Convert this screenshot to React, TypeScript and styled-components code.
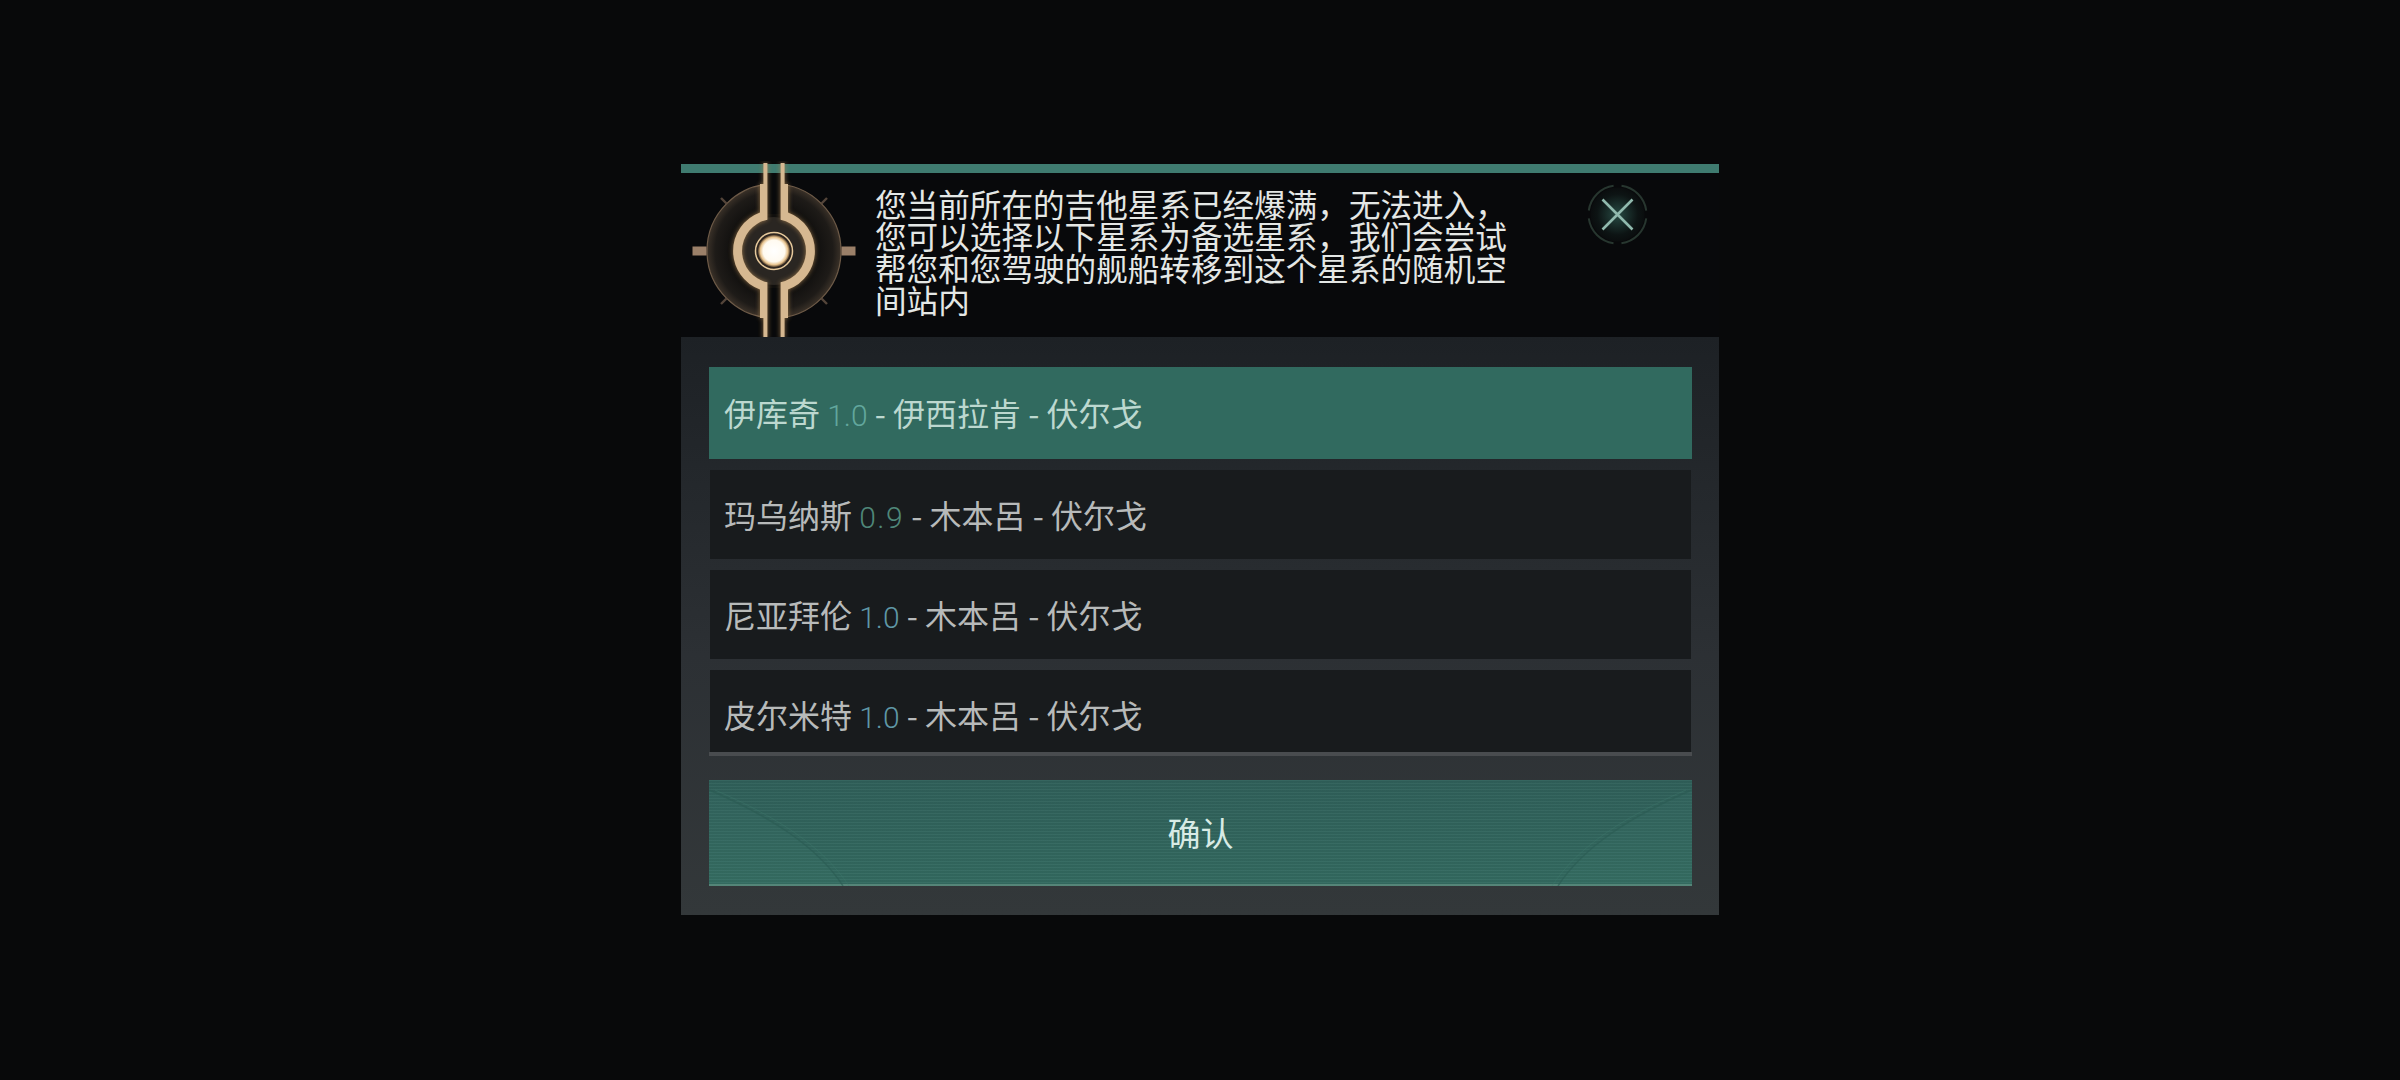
import React from "react"
import styled, { createGlobalStyle } from "styled-components"

const GlobalStyle = createGlobalStyle`
  html, body {
    margin: 0;
    padding: 0;
    background: #08090a;
  }
  body {
    font-family: "Noto Sans CJK SC", "Noto Sans", sans-serif;
  }
`

type System = { name: string; level: string; tone: string; region: string; active?: boolean; wide?: boolean }

const systems: System[] = [
  { name: "伊库奇", level: "1.0", tone: "#62a79d", region: "伊西拉肯", active: true },
  { name: "玛乌纳斯", level: "0.9", tone: "#4f8779", region: "木本呂", wide: true },
  { name: "尼亚拜伦", level: "1.0", tone: "#5f98a6", region: "木本呂" },
  { name: "皮尔米特", level: "1.0", tone: "#5f98a6", region: "木本呂" },
]

const Emblem: React.FC = () => {
  const half = "M-10.6 -88 L-6.6 -88 L-6.6 -31.3 A32 32 0 0 0 -6.6 31.3 L-6.6 88 L-10.6 88 L-10.6 67 L-14 67 L-14 38.5 A41 41 0 0 1 -14 -38.5 L-14 -67 L-10.6 -67 Z"
  return (
    <EmblemSvg viewBox="0 0 180 180">
      <defs>
        <radialGradient id="disc" cx="50%" cy="50%" r="50%">
          <stop offset="62%" stopColor="#100f0e" />
          <stop offset="88%" stopColor="#1e1b18" />
          <stop offset="100%" stopColor="#3a3128" />
        </radialGradient>
        <radialGradient id="core" cx="50%" cy="50%" r="50%">
          <stop offset="0%" stopColor="#ffffff" />
          <stop offset="68%" stopColor="#fffaf0" />
          <stop offset="86%" stopColor="#e8c48f" />
          <stop offset="100%" stopColor="#5c4630" />
        </radialGradient>
        <filter id="glow" x="-30%" y="-30%" width="160%" height="160%">
          <feGaussianBlur stdDeviation="2.4" />
        </filter>
      </defs>
      <g transform="translate(90 90)">
        <circle r="67" fill="url(#disc)" stroke="#6e5b48" strokeWidth="1.2" />
        <rect x="-14" y="-69" width="28" height="32" fill="#08090b" />
        <rect x="-14" y="37" width="28" height="32" fill="#08090b" />
        <circle r="34" fill="#2a2622" />
        <g stroke="#54453a" strokeWidth="2.4">
          <path d="M-47.5 -47.5 L-53 -53" />
          <path d="M47.5 -47.5 L53 -53" />
          <path d="M-47.5 47.5 L-53 53" />
          <path d="M47.5 47.5 L53 53" />
        </g>
        <rect x="-81.5" y="-4.5" width="14" height="9" fill="#9b8069" />
        <rect x="67.5" y="-4.5" width="14" height="9" fill="#9b8069" />
        <g filter="url(#glow)" fill="#a8814f" opacity="0.85">
          <path d={half} />
          <path d={half} transform="scale(-1 1)" />
        </g>
        <g fill="#d6b891">
          <path d={half} />
          <path d={half} transform="scale(-1 1)" />
        </g>
        <circle r="18.5" fill="#2e2620" stroke="#e6c99c" strokeWidth="1.5" />
        <circle r="16" fill="url(#core)" />
      </g>
    </EmblemSvg>
  )
}

const CloseIcon: React.FC = () => (
  <CloseButton>
    <svg viewBox="0 0 63 63" width="63" height="63">
      <defs>
        <radialGradient id="closeGlow" cx="50%" cy="50%" r="50%">
          <stop offset="0%" stopColor="#274a43" />
          <stop offset="75%" stopColor="#0d1414" />
          <stop offset="100%" stopColor="#0a0d0e" />
        </radialGradient>
      </defs>
      <circle cx="31.5" cy="31.5" r="27" fill="url(#closeGlow)" />
      <circle
        cx="31.5"
        cy="31.5"
        r="29"
        fill="none"
        stroke="#27362f"
        strokeWidth="2"
        strokeDasharray="37.5 8"
        strokeDashoffset="-4"
      />
      <path d="M16.5 16.5 L46.5 46.5 M46.5 16.5 L16.5 46.5" stroke="#90b9ad" strokeWidth="2.6" />
    </svg>
  </CloseButton>
)

const CornerArt: React.FC = () => (
  <>
    <path d="M0 10 C60 36 108 66 134 106 L0 106 Z" fill="#4a8a7d" opacity="0.08" />
    <path d="M0 10 C60 36 108 66 134 106" fill="none" stroke="#2c5c54" strokeWidth="1.5" opacity="0.6" />
    <path d="M6 10 C66 36 114 66 140 106" fill="none" stroke="#3f7a6e" strokeWidth="1" opacity="0.35" />
  </>
)

export default function App() {
  return (
    <>
      <GlobalStyle />
      <Page>
        <Dialog>
          <Header>
            <Emblem />
            <Message>
              您当前所在的吉他星系已经爆满，无法进入，您可以选择以下星系为备选星系，我们会尝试帮您和您驾驶的舰船转移到这个星系的随机空间站内
            </Message>
            <CloseIcon />
          </Header>
          <Body>
            <List>
              {systems.map((s) => (
                <Row key={s.name} $active={s.active}>
                  {s.name} <Level $wide={s.wide} style={{ color: s.tone }}>{s.level}</Level> - {s.region} - 伏尔戈
                </Row>
              ))}
            </List>
            <ConfirmButton>
              <CornerLeft viewBox="0 0 150 106" preserveAspectRatio="none">
                <CornerArt />
              </CornerLeft>
              确认
              <CornerRight viewBox="0 0 150 106" preserveAspectRatio="none">
                <CornerArt />
              </CornerRight>
            </ConfirmButton>
          </Body>
        </Dialog>
      </Page>
    </>
  )
}

const Page = styled.div`
  min-height: 1078px;
  display: flex;
  align-items: center;
  justify-content: center;
`

const Dialog = styled.div`
  width: 1038px;
  display: flex;
  flex-direction: column;
`

const Header = styled.div`
  height: 164px;
  display: flex;
  align-items: flex-start;
  padding-left: 3px;
  background: #08090b;
  border-top: 9px solid #3f7b70;
`

const EmblemSvg = styled.svg`
  position: relative;
  flex: none;
  width: 180px;
  height: 180px;
  margin-top: -12px;
  margin-bottom: -4px;
`

const Message = styled.p`
  flex: none;
  width: 640px;
  margin: 14px 0 0 11px;
  font-size: 31.6px;
  line-height: 32px;
  color: #e4e7e5;
`

const CloseButton = styled.div`
  flex: none;
  width: 63px;
  height: 63px;
  margin: 10px 0 0 71px;
`

const Body = styled.div`
  position: relative;
  display: flex;
  flex-direction: column;
  padding: 30px 27px 29px 28px;
  background: linear-gradient(180deg, #1d2125 0%, #2c3034 55%, #33383a 100%);
`

const List = styled.div`
  height: 385px;
  overflow: hidden;
  display: flex;
  flex-direction: column;
  gap: 11px;
  border-bottom: 4px solid #494c4f;
`

const Row = styled.div<{ $active?: boolean }>`
  flex: none;
  height: ${({ $active }) => ($active ? "92px" : "89px")};
  margin: ${({ $active }) => ($active ? "0" : "0 1px")};
  box-sizing: border-box;
  padding: 0 ${({ $active }) => ($active ? "15px" : "14px")};
  line-height: ${({ $active }) => ($active ? "90px" : "88px")};
  font-size: 32px;
  white-space: pre-wrap;
  color: ${({ $active }) => ($active ? "#bcd8cf" : "#b7baba")};
  background: ${({ $active }) => ($active ? "#316a5f" : "#181b1d")};
`

const Level = styled.span<{ $wide?: boolean }>`
  font-family: Roboto, sans-serif;
  font-weight: 300;
  font-size: 30px;
  letter-spacing: ${({ $wide }) => ($wide ? "1.5px" : "0")};
`

const ConfirmButton = styled.div`
  position: relative;
  height: 106px;
  margin-top: 24px;
  box-sizing: border-box;
  display: flex;
  align-items: center;
  justify-content: center;
  font-size: 33px;
  color: #d8ebe5;
  border-bottom: 2px solid #558578;
  background:
    repeating-linear-gradient(180deg, rgba(255, 255, 255, 0.03) 0 1px, rgba(0, 0, 0, 0.04) 1px 3px),
    linear-gradient(180deg, #30605a 0%, #336a60 100%);
`

const CornerLeft = styled.svg`
  position: absolute;
  left: 0;
  top: 0;
  width: 150px;
  height: 106px;
`

const CornerRight = styled(CornerLeft)`
  left: auto;
  right: 0;
  transform: scaleX(-1);
`
